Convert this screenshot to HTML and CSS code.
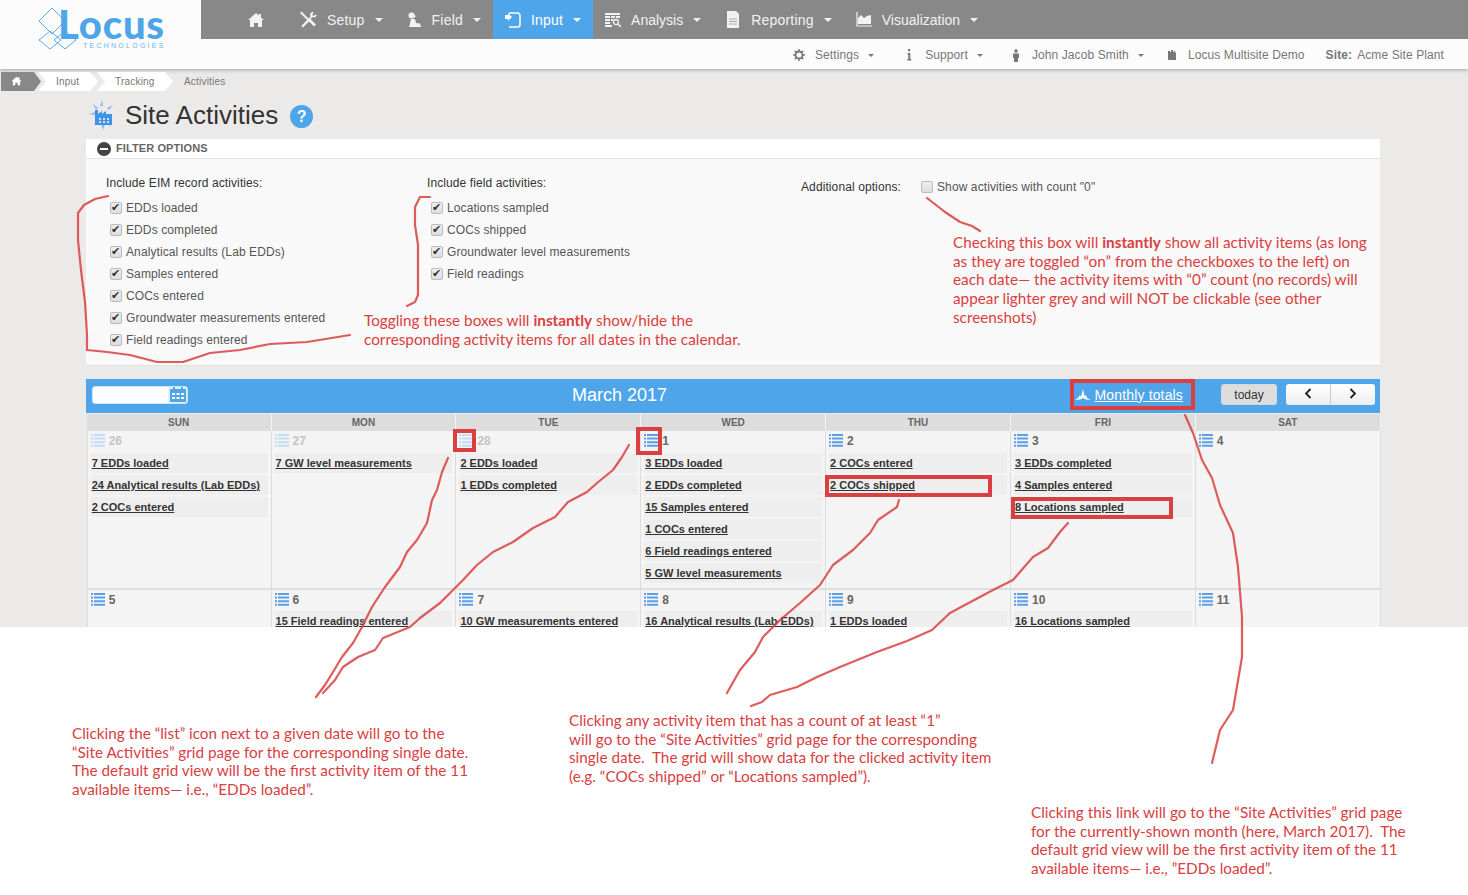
FILE: index.html
```html
<!DOCTYPE html>
<html lang="en">

<head>
    <meta charset="UTF-8">
    <title>Site Activities</title>
    <link rel="stylesheet" href="styles.css">
</head>

<body>
    <svg class="defs" width="0" height="0">
        <symbol id="list" viewBox="0 0 14 13">
            <path d="M0 0h2v2H0zM3 0h11v2H3zM0 3.6h2v2H0zM3 3.6h11v2H3zM0 7.2h2v2H0zM3 7.2h11v2H3zM0 10.8h2v2H0zM3 10.8h11v2H3z" />
        </symbol>
    </svg>

    <div class="screen">
        <div class="top">
            <a class="logo">
                <svg width="140" height="50" viewBox="0 0 140 50">
                    <g fill="none" stroke="#5aa9ea" stroke-width="1">
                        <path d="M14 1 1 14l13 13 13-13z" />
                        <path d="M12 24 1 33l11 9 11-9z" />
                        <path d="M27 24 16 33l11 9 11-9z" />
                    </g>
                    <text class="logo-word" x="20" y="32">Locus</text>
                    <text class="logo-sub" x="45" y="41">TECHNOLOGIES</text>
                </svg>
            </a>
            <div class="top-right">
                <ul class="nav">
                    <li class="nav-home">
                        <svg width="18" height="16" viewBox="0 0 18 16"><path fill="#f2f2f2" d="M9 1 1 8h2v7h4v-4h4v4h4V8h2l-3-2.6V2h-2v1.600z" /></svg>
                    </li>
                    <li>
                        <svg width="17" height="17" viewBox="0 0 17 17"><path fill="#f2f2f2" d="M12.500.5 10 3l.5 2.500-2 2L3 2 1.500.5 0 2l2 2 5.200 5-6 6L3 16.500l6-6 5 5 2-2-5.500-5.500 2-2 2.500.5L17 4l-2-.2-1.500 1.300-1.300-1.300L13.500 2z" /></svg>
                        <span>Setup</span><i class="caret"></i>
                    </li>
                    <li>
                        <svg width="15" height="16" viewBox="0 0 15 16"><circle cx="4.500" cy="3.500" r="3" fill="#f2f2f2" /><path fill="#f2f2f2" d="M7 3l2 1-2 2zM4 7h4l1 4 4 .5 1 3.500H2l1-3.500z" /></svg>
                        <span>Field</span><i class="caret"></i>
                    </li>
                    <li class="active">
                        <svg width="16" height="16" viewBox="0 0 16 16"><path fill="none" stroke="#fff" stroke-width="1.500" d="M4 1h8.500A2.500 2.500 0 0 1 15 3.500v9a2.500 2.500 0 0 1-2.500 2.500H4" /><path fill="#fff" d="M0 3h3V1l4 4-4 4V7H0z" /></svg>
                        <span>Input</span><i class="caret"></i>
                    </li>
                    <li class="tight">
                        <svg width="16" height="14" viewBox="0 0 16 14"><path fill="#f2f2f2" d="M0 0h15v2H0zM0 3h5v2H0zM6 3h4v2H6zM11 3h4v2h-4zM0 6h5v2H0zM6 6h2v2H6zM0 9h5v2H0zM0 12h7v2H0z" /><circle cx="11" cy="9" r="2.500" fill="none" stroke="#f2f2f2" stroke-width="1.300" /><path stroke="#f2f2f2" stroke-width="1.500" d="m13 11 3 3" /></svg>
                        <span>Analysis</span><i class="caret"></i>
                    </li>
                    <li>
                        <svg width="16" height="17" viewBox="0 0 16 17"><path fill="#f2f2f2" d="M2 0h9l3 3v14H2z" /><path stroke="#aaa" d="M4 8h8M4 10.500h8M4 13h8" /></svg>
                        <span>Reporting</span><i class="caret"></i>
                    </li>
                    <li class="tight">
                        <svg width="16" height="15" viewBox="0 0 16 15"><path fill="none" stroke="#f2f2f2" stroke-width="1.200" d="M1 0v14h15" /><path fill="#f2f2f2" d="M2 12V6l3-3 3 3 3-2 4-1v9z" /></svg>
                        <span>Visualization</span><i class="caret"></i>
                    </li>
                </ul>
                <ul class="subnav">
                    <li>
                        <svg width="12" height="12" viewBox="0 0 12 12"><circle cx="6" cy="6" r="3.500" fill="none" stroke="#777" stroke-width="1.800" /><path stroke="#777" stroke-width="1.500" d="M6 0v2.500M6 9.500V12M0 6h2.500M9.500 6H12M1.800 1.800l1.800 1.800M8.400 8.400l1.800 1.800M1.800 10.200l1.800-1.800M8.400 3.600l1.800-1.800" /></svg>
                        <span>Settings</span><i class="caret small"></i>
                    </li>
                    <li class="site-support">
                        <svg width="12" height="12" viewBox="0 0 12 12"><path fill="#777" d="M5 0h2.200v2.200H5zM4.300 4h3v6h1v1.500H4.300V10h1V5.300h-1z" /></svg>
                        <span>Support</span><i class="caret small"></i>
                    </li>
                    <li class="site-user">
                        <svg width="12" height="13" viewBox="0 0 12 13"><circle cx="6" cy="2" r="1.800" fill="#777" /><path fill="#777" d="M3 4.500h6v4.500H8v4H4V9H3z" /></svg>
                        <span>John Jacob Smith</span><i class="caret small"></i>
                    </li>
                    <li class="site-demo">
                        <svg width="12" height="12" viewBox="0 0 12 12"><path fill="#777" d="M2 5V2h2v1h1V1h2v2h1V2h1v1.500h1V11H3a1 1 0 0 1-1-1z" /></svg>
                        <span>Locus Multisite Demo</span>
                    </li>
                    <li class="site"><b>Site:</b><span>Acme Site Plant</span></li>
                </ul>
            </div>
        </div>

        <div class="crumbs">
            <a class="crumb crumb-home">
                <svg width="11" height="10" viewBox="0 0 18 16"><path fill="#fff" d="M9 1 1 8h2v7h4v-4h4v4h4V8h2l-3-2.600V2h-2v1.600z" /></svg>
            </a>
            <a class="crumb crumb-input">Input</a>
            <a class="crumb crumb-track">Tracking</a>
            <span class="crumb-last">Activities</span>
        </div>

        <div class="title">
            <svg width="25" height="30" viewBox="0 0 25 30">
                <path fill="#8fb8f0" d="M13 0l1 6h-3zM0 14l6-2v3zM24 5l-4 5-2-2zM14 30l-2-6h4zM22 27l-5-4 2-2zM5 25l3-5 2 2zM4 4l5 4-2 2z" />
                <path fill="#3f93e0" d="M6 10h3v4l4-3v3l4-3v3h6v11H6z" />
                <path fill="#cfe4fa" d="M10 18h2v2h-2zM14 18h2v2h-2zM18 18h2v2h-2zM10 21h2v2h-2zM14 21h2v2h-2zM18 21h2v2h-2z" />
            </svg>
            <h1>Site Activities</h1>
            <span class="help">?</span>
        </div>

        <div class="filter">
            <div class="filter-head">
                <span class="minus"></span>
                <span class="filter-name">FILTER OPTIONS</span>
            </div>
            <div class="filter-body">
                <div class="col col-eim">
                    <div class="col-label">Include EIM record activities:</div>
                    <label><input type="checkbox" checked>EDDs loaded</label>
                    <label><input type="checkbox" checked>EDDs completed</label>
                    <label><input type="checkbox" checked>Analytical results (Lab EDDs)</label>
                    <label><input type="checkbox" checked>Samples entered</label>
                    <label><input type="checkbox" checked>COCs entered</label>
                    <label><input type="checkbox" checked>Groundwater measurements entered</label>
                    <label><input type="checkbox" checked>Field readings entered</label>
                </div>
                <div class="col col-field">
                    <div class="col-label">Include field activities:</div>
                    <label><input type="checkbox" checked>Locations sampled</label>
                    <label><input type="checkbox" checked>COCs shipped</label>
                    <label><input type="checkbox" checked>Groundwater level measurements</label>
                    <label><input type="checkbox" checked>Field readings</label>
                </div>
                <div class="col-extra">
                    <div class="col-label">Additional options:</div>
                    <label><input type="checkbox">Show activities with count "0"</label>
                </div>
            </div>
        </div>

        <div class="cal">
            <div class="cal-bar">
                <div class="date-box">
                    <svg width="16" height="15" viewBox="0 0 16 15"><path fill="#4fa5ea" d="M0 2h3V0h2v2h6V0h2v2h3v13H0z" /><path fill="#fff" d="M2 6h3v2H2zM6.500 6h3v2h-3zM11 6h3v2h-3zM2 10h3v2H2zM6.500 10h3v2h-3zM11 10h3v2h-3z" /></svg>
                </div>
                <h2>March 2017</h2>
                <a class="totals">
                    <svg width="16" height="12" viewBox="0 0 16 12"><path fill="#fff" d="M0 11l3-2 2-3 1 2 2-8 1.500 7 1.500-1 1 3 4 2-5-.5L8 9l-3 1.500z" /></svg>
                    <span>Monthly totals</span>
                </a>
                <button class="today">today</button>
                <div class="arrows">
                    <button>
                        <svg width="8" height="11" viewBox="0 0 8 11"><path fill="none" stroke="#222" stroke-width="1.800" d="M6.500 1 2 5.500 6.500 10" /></svg>
                    </button>
                    <button>
                        <svg width="8" height="11" viewBox="0 0 8 11"><path fill="none" stroke="#222" stroke-width="1.800" d="M1.500 1 6 5.500 1.500 10" /></svg>
                    </button>
                </div>
            </div>
            <div class="grid">
                <div class="dow">SUN</div>
                <div class="dow">MON</div>
                <div class="dow">TUE</div>
                <div class="dow">WED</div>
                <div class="dow">THU</div>
                <div class="dow">FRI</div>
                <div class="dow">SAT</div>

                <div class="day off">
                    <div class="num"><svg class="ico"><use href="#list" /></svg>26</div>
                    <a>7 EDDs loaded</a>
                    <a>24 Analytical results (Lab EDDs)</a>
                    <a>2 COCs entered</a>
                </div>
                <div class="day off">
                    <div class="num"><svg class="ico"><use href="#list" /></svg>27</div>
                    <a>7 GW level measurements</a>
                </div>
                <div class="day off">
                    <div class="num"><svg class="ico"><use href="#list" /></svg>28</div>
                    <a>2 EDDs loaded</a>
                    <a>1 EDDs completed</a>
                </div>
                <div class="day">
                    <div class="num"><svg class="ico"><use href="#list" /></svg>1</div>
                    <a>3 EDDs loaded</a>
                    <a>2 EDDs completed</a>
                    <a>15 Samples entered</a>
                    <a>1 COCs entered</a>
                    <a>6 Field readings entered</a>
                    <a>5 GW level measurements</a>
                </div>
                <div class="day">
                    <div class="num"><svg class="ico"><use href="#list" /></svg>2</div>
                    <a>2 COCs entered</a>
                    <a>2 COCs shipped</a>
                </div>
                <div class="day">
                    <div class="num"><svg class="ico"><use href="#list" /></svg>3</div>
                    <a>3 EDDs completed</a>
                    <a>4 Samples entered</a>
                    <a>8 Locations sampled</a>
                </div>
                <div class="day">
                    <div class="num"><svg class="ico"><use href="#list" /></svg>4</div>
                </div>

                <div class="day week2">
                    <div class="num"><svg class="ico"><use href="#list" /></svg>5</div>
                </div>
                <div class="day week2">
                    <div class="num"><svg class="ico"><use href="#list" /></svg>6</div>
                    <a>15 Field readings entered</a>
                </div>
                <div class="day week2">
                    <div class="num"><svg class="ico"><use href="#list" /></svg>7</div>
                    <a>10 GW measurements entered</a>
                </div>
                <div class="day week2">
                    <div class="num"><svg class="ico"><use href="#list" /></svg>8</div>
                    <a>16 Analytical results (Lab EDDs)</a>
                </div>
                <div class="day week2">
                    <div class="num"><svg class="ico"><use href="#list" /></svg>9</div>
                    <a>1 EDDs loaded</a>
                </div>
                <div class="day week2">
                    <div class="num"><svg class="ico"><use href="#list" /></svg>10</div>
                    <a>16 Locations sampled</a>
                </div>
                <div class="day week2">
                    <div class="num"><svg class="ico"><use href="#list" /></svg>11</div>
                </div>
            </div>
        </div>
    </div>

    <!-- hand drawn markup that lies over the screenshot -->
    <svg class="ink" width="1468" height="895" viewBox="0 0 1468 895">
        <polyline points="108,196 95,199 84,205 78,213 78,240 81,270 85,302 87,335 87,350 107,352 130,355 157,362 183,362 210,353 240,350 270,344 307,342 350,335" />
        <polyline points="430,197 420,197 415,207 415,225 418,245 418,275 418,295 415,302 407,306" />
        <polyline points="927,198 945,212 960,222 972,226 980,231" />
        <polyline points="448,458 442,472 437,490 432,500 427,523 417,540 407,552 400,567 385,587 372,607 362,627 353,643 342,657 333,672 325,685 316,697" />
        <polyline points="629,445 622,457 613,470 597,483 587,492 568,502 555,517 533,528 513,542 493,552 477,565 463,580 455,588 440,603 420,618 410,627 383,638 375,650 358,657 343,667 335,680 323,693" />
        <polyline points="899,500 897,507 878,520 870,533 853,550 833,565 820,585 800,603 780,620 763,637 755,652 740,670 727,693" />
        <polyline points="1068,523 1060,532 1048,548 1033,557 1013,580 993,590 950,613 932,630 907,641 877,652 840,667 817,677 797,687 770,695 762,702 751,706" />
        <polyline points="1185,415 1193,433 1202,460 1212,478 1220,505 1233,533 1238,567 1242,617 1242,657 1233,710 1220,730 1212,763" />
        <rect x="455" y="431" width="19" height="19" />
        <rect x="638" y="429" width="22" height="24" />
        <rect x="827" y="477" width="163" height="18" />
        <rect x="1013" y="499" width="158" height="18" />
        <rect x="1072" y="381" width="121" height="27" />
    </svg>

    <p class="note note-toggle">Toggling these boxes will <b>instantly</b> show/hide the<br>corresponding activity items for all dates in the calendar.</p>
    <p class="note note-check">Checking this box will <b>instantly</b> show all activity items (as long<br>as they are toggled “on” from the checkboxes to the left) on<br>each date— the activity items with “0” count (no records) will<br>appear lighter grey and will NOT be clickable (see other<br>screenshots)</p>
    <p class="note note-list">Clicking the “list” icon next to a given date will go to the<br>“Site Activities” grid page for the corresponding single date.<br>The default grid view will be the first activity item of the 11<br>available items— i.e., “EDDs loaded”.</p>
    <p class="note note-item">Clicking any activity item that has a count of at least “1”<br>will go to the “Site Activities” grid page for the corresponding<br>single date.&nbsp; The grid will show data for the clicked activity item<br>(e.g. “COCs shipped” or “Locations sampled”).</p>
    <p class="note note-link">Clicking this link will go to the “Site Activities” grid page<br>for the currently-shown month (here, March 2017).&nbsp; The<br>default grid view will be the first activity item of the 11<br>available items— i.e., ”EDDs loaded”.</p>
</body>

</html>
```

FILE: styles.css
```css
* {
    padding: 0;
    margin: 0;
    list-style: none;
    box-sizing: border-box;
}

body {
    position: relative;
    height: 895px;
    overflow: hidden;
    background: #fff;
    font-family: "Liberation Sans", Arial, sans-serif;
    font-size: 12px;
    color: #333;
}

.defs {
    position: absolute;
}

.screen {
    height: 627px;
    overflow: hidden;
    background: #ebeae8;
}

/* header */
.top {
    display: flex;
    height: 69px;
    background: #fcfcfc;
    box-shadow: 0 1px 4px rgba(0, 0, 0, .3);
}

.logo {
    width: 201px;
    flex: none;
    padding: 7px 0 0 38px;
}

.logo svg {
    display: block;
    overflow: visible;
}

.logo-word {
    font-family: Lato, sans-serif;
    font-weight: 900;
    font-size: 40px;
    letter-spacing: .8px;
    fill: #4fa5ea;
}

.logo-sub {
    font-family: "Liberation Sans", sans-serif;
    font-size: 7px;
    letter-spacing: 2.25px;
    fill: #6cb2ec;
}

.top-right {
    flex: 1;
}

.nav {
    display: flex;
    height: 39px;
    padding-left: 34px;
    background: #888;
    color: #f2f2f2;
    font-size: 14px;
    letter-spacing: .2px;
}

.nav li {
    display: flex;
    align-items: center;
    padding: 0 12px;
}

.nav .tight {
    letter-spacing: 0;
}

.nav li svg {
    margin-right: 10px;
}

.nav .nav-home {
    margin-right: 11px;
}

.nav .nav-home svg {
    margin-right: 0;
}

.nav .active {
    background: #4fa5ea;
    color: #fff;
}

.caret {
    width: 0;
    height: 0;
    margin-left: 10px;
    border-top: 4px solid currentColor;
    border-left: 4px solid transparent;
    border-right: 4px solid transparent;
}

.caret.small {
    margin-left: 9px;
    border-top-width: 3px;
    border-left-width: 3px;
    border-right-width: 3px;
}

.subnav {
    display: flex;
    justify-content: flex-end;
    align-items: center;
    height: 30px;
    padding: 2px 24px 0 0;
    color: #777;
    font-size: 12px;
    letter-spacing: .1px;
}

.subnav li {
    display: flex;
    align-items: center;
    margin-left: 30px;
}

.subnav li svg {
    margin-right: 10px;
}

.subnav .site-support {
    margin-left: 29px;
}

.subnav .site-user {
    margin-left: 27px;
}

.subnav .site-demo {
    margin-left: 22px;
}

.subnav .site {
    margin-left: 21px;
}

.site span {
    margin-left: 5px;
}

/* breadcrumb */
.crumbs {
    display: flex;
    align-items: center;
    height: 19px;
    margin: 3px 0 0 1px;
    font-size: 10px;
    letter-spacing: .2px;
    color: #777;
}

.crumb {
    display: flex;
    align-items: center;
    height: 19px;
    padding-bottom: 1px;
    background: #fff;
    clip-path: polygon(0 0, calc(100% - 8px) 0, 100% 50%, calc(100% - 8px) 100%, 0 100%, 8px 50%);
}

.crumb-home {
    width: 40px;
    padding-left: 10px;
    background: #888;
    clip-path: polygon(0 0, calc(100% - 7px) 0, 100% 50%, calc(100% - 7px) 100%, 0 100%);
}

.crumb-input {
    width: 60px;
    margin-left: -3px;
    padding-left: 18px;
}

.crumb-track {
    width: 76px;
    margin-left: -1px;
    padding-left: 18px;
}

.crumb-last {
    margin: 0 0 1px 11px;
}

/* page title */
.title {
    display: flex;
    align-items: center;
    height: 30px;
    margin: 9px 0 9px 89px;
}

.title h1 {
    margin-left: 11px;
    font-weight: normal;
    font-size: 26px;
    color: #333;
}

.help {
    width: 23px;
    height: 23px;
    margin: 2px 0 0 12px;
    border-radius: 50%;
    background: #4fa5ea;
    color: #fff;
    font-weight: bold;
    font-size: 16px;
    line-height: 23px;
    text-align: center;
}

/* filter panel */
.filter {
    height: 227px;
    margin: 0 88px 13px 86px;
    background: #f9f9f9;
    border-bottom: 1px solid #e2e2e2;
}

.filter-head {
    display: flex;
    align-items: center;
    height: 20px;
    padding-left: 11px;
    background: #fff;
    border-bottom: 1px solid #e4e4e4;
    font-weight: bold;
    font-size: 11px;
    letter-spacing: .1px;
    color: #666;
}

.filter-name {
    margin-bottom: 2px;
}

.minus {
    position: relative;
    width: 14px;
    height: 14px;
    margin-right: 5px;
    border-radius: 50%;
    background: #444;
}

.minus::after {
    content: "";
    position: absolute;
    left: 3px;
    top: 6px;
    width: 8px;
    height: 2px;
    background: #fff;
}

.filter-body {
    display: flex;
    padding: 17px 0 0 20px;
    letter-spacing: .1px;
}

.col {
    display: flex;
    flex-direction: column;
    align-items: flex-start;
}

.col-eim {
    width: 321px;
}

.col-field {
    width: 374px;
}

.col-label {
    height: 14px;
    line-height: 14px;
    color: #333;
}

.col label {
    display: flex;
    align-items: center;
    height: 22px;
    padding-left: 4px;
    color: #555;
}

.col-label + label {
    margin-top: 7px;
}

.col-extra {
    display: flex;
    align-items: center;
    height: 14px;
    margin-top: 4px;
}

.col-extra .col-label {
    width: 120px;
}

.col-extra label {
    display: flex;
    align-items: center;
    margin-top: -1px;
    color: #555;
}

input[type=checkbox] {
    appearance: none;
    position: relative;
    width: 12px;
    height: 12px;
    margin-right: 4px;
    border: 1px solid #bbb;
    border-radius: 2px;
    background: linear-gradient(#eee, #ddd);
}

input[type=checkbox]:checked::after {
    content: "✔";
    position: absolute;
    left: 0;
    top: -2px;
    font-family: "DejaVu Sans", sans-serif;
    font-size: 11px;
    line-height: 14px;
    color: #333;
}

/* calendar */
.cal {
    margin: 0 88px 0 86px;
}

.cal-bar {
    position: relative;
    display: flex;
    align-items: center;
    height: 34px;
    padding: 0 5px 0 6px;
    background: #4fa5ea;
    color: #fff;
}

.date-box {
    display: flex;
    justify-content: flex-end;
    align-items: center;
    width: 96px;
    height: 18px;
    margin-top: -3px;
    padding-right: 1px;
    background: linear-gradient(to right, #fff 80%, #e4f0fb 80%);
    border: 1px solid #cfe4f8;
    border-radius: 3px;
}

.cal-bar h2 {
    position: absolute;
    left: 486px;
    top: 6px;
    font-weight: normal;
    font-size: 18px;
    line-height: 21px;
}

.totals {
    display: flex;
    align-items: center;
    margin-left: auto;
    margin-top: -3px;
    font-size: 14px;
    letter-spacing: .15px;
    color: #fff;
}

.totals svg {
    margin-right: 4px;
}

.totals span {
    text-decoration: underline;
}

.today {
    width: 56px;
    height: 21px;
    margin: -3px 9px 0 38px;
    border: 0;
    border-radius: 3px;
    background: #ddd;
    box-shadow: 0 0 1px #aaa inset;
    font-family: inherit;
    font-size: 12px;
    color: #333;
}

.arrows {
    display: flex;
    width: 89px;
    height: 21px;
    margin-top: -3px;
}

.arrows button {
    flex: 1;
    border: 0;
    background: linear-gradient(#fff, #eee);
    border-right: 1px solid #ccc;
}

.arrows button:first-child {
    border-radius: 3px 0 0 3px;
}

.arrows button:last-child {
    border-right: 0;
    border-radius: 0 3px 3px 0;
}

.grid {
    display: grid;
    grid-template-columns: repeat(7, 1fr);
    margin: 0 -.7px 0 .7px;
}

.dow {
    height: 17px;
    margin-top: 1px;
    background: #ddd;
    border-right: 1px solid #f4f4f4;
    font-weight: bold;
    font-size: 10px;
    line-height: 17px;
    text-align: center;
    color: #666;
}

.day {
    height: 159px;
    padding: 0 3px;
    background: #f4f4f4;
    border-right: 1px solid #ddd;
    border-bottom: 2px solid #ddd;
}

.day:nth-child(7n + 1) {
    border-left: 1px solid #ddd;
}

.num {
    display: flex;
    align-items: center;
    height: 19px;
    margin-bottom: 3px;
    font-weight: bold;
    font-size: 12px;
    color: #666;
}

.week2 .num {
    margin-bottom: 2px;
}

.ico {
    width: 14px;
    height: 13px;
    margin-right: 4px;
    fill: #5c9ee8;
}

.off .num {
    color: #c4c4c4;
}

.off .ico {
    fill: #c4dcf6;
}

.day a {
    display: block;
    height: 20px;
    margin-bottom: 2px;
    padding-left: 1px;
    background: #eee;
    font-weight: bold;
    font-size: 11px;
    line-height: 20px;
    text-decoration: underline;
    white-space: nowrap;
    color: #333;
}

/* annotations */
.ink {
    position: absolute;
    left: 0;
    top: 0;
    fill: none;
    stroke: #d9403f;
}

.ink polyline {
    stroke-width: 2.2;
    stroke-linejoin: round;
    stroke-linecap: round;
    opacity: .85;
}

.ink rect {
    stroke-width: 4;
}

.note {
    position: absolute;
    font-family: Lato, "Liberation Sans", sans-serif;
    font-size: 15.3px;
    line-height: 18.7px;
    white-space: nowrap;
    color: #d9403f;
}

.note-toggle {
    left: 364px;
    top: 311px;
}

.note-check {
    left: 953px;
    top: 233px;
}

.note-list {
    left: 72px;
    top: 724px;
}

.note-item {
    left: 569px;
    top: 711px;
}

.note-link {
    left: 1031px;
    top: 803px;
}
```
